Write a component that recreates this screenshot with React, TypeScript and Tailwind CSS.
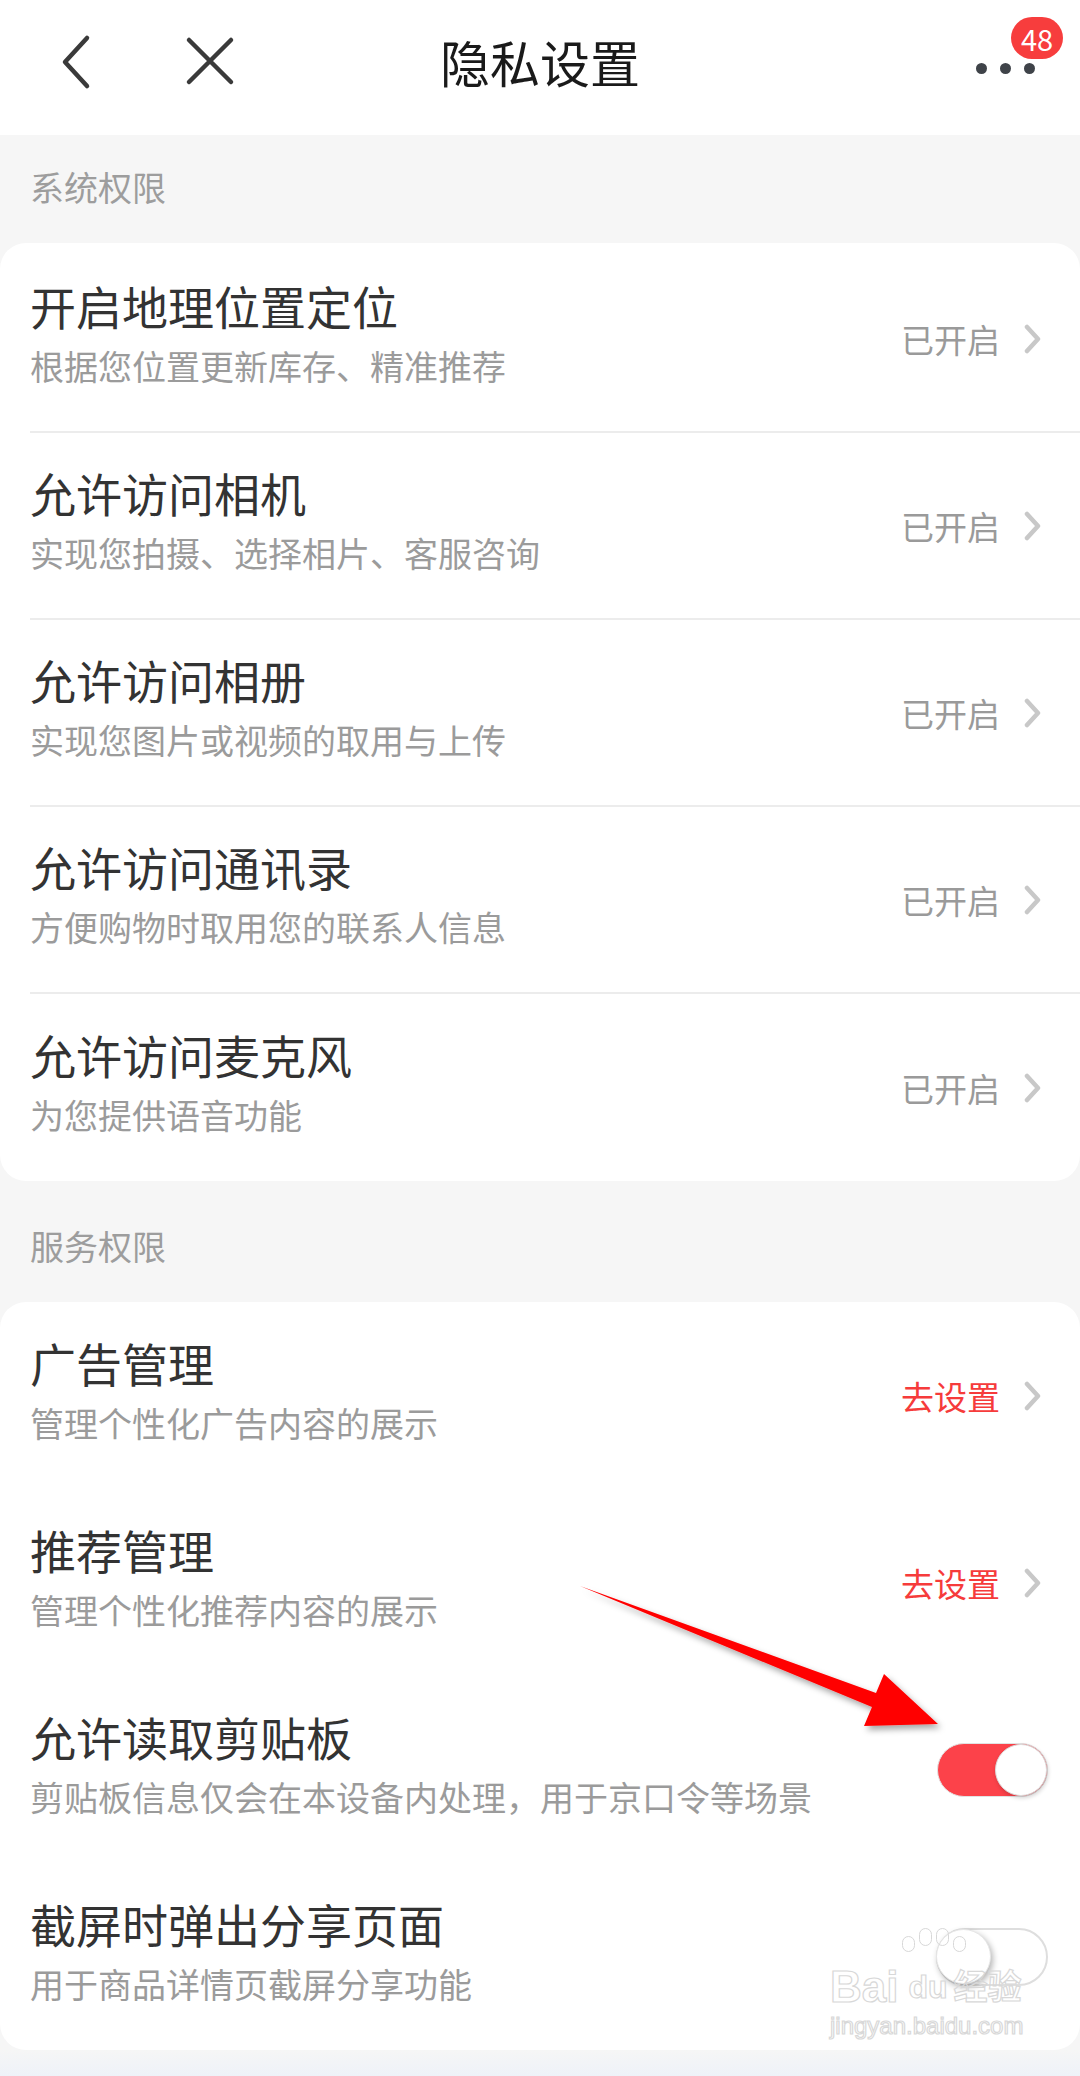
import React from 'react';

const font = { fontFamily: '"Noto Sans CJK SC", "Noto Sans", sans-serif' };

type Item = {
  title: string;
  sub: string;
  right: 'on' | 'set' | 'toggleOn' | 'toggleOff';
};

const systemItems: Item[] = [
  { title: '开启地理位置定位', sub: '根据您位置更新库存、精准推荐', right: 'on' },
  { title: '允许访问相机', sub: '实现您拍摄、选择相片、客服咨询', right: 'on' },
  { title: '允许访问相册', sub: '实现您图片或视频的取用与上传', right: 'on' },
  { title: '允许访问通讯录', sub: '方便购物时取用您的联系人信息', right: 'on' },
  { title: '允许访问麦克风', sub: '为您提供语音功能', right: 'on' },
];

const serviceItems: Item[] = [
  { title: '广告管理', sub: '管理个性化广告内容的展示', right: 'set' },
  { title: '推荐管理', sub: '管理个性化推荐内容的展示', right: 'set' },
  { title: '允许读取剪贴板', sub: '剪贴板信息仅会在本设备内处理，用于京口令等场景', right: 'toggleOn' },
  { title: '截屏时弹出分享页面', sub: '用于商品详情页截屏分享功能', right: 'toggleOff' },
];

const Chevron = () => (
  <svg width="18" height="30" viewBox="0 0 18 30" className="ml-[24px]">
    <path d="M3 3 L14 15 L3 27" fill="none" stroke="#c8c8c8" strokeWidth="4.5" strokeLinecap="round" strokeLinejoin="round" />
  </svg>
);

const Right = ({ kind }: { kind: Item['right'] }) => {
  if (kind === 'on' || kind === 'set') {
    return (
      <div className="flex items-center">
        <span
          className={
            kind === 'on'
              ? 'text-[33px] leading-[44px] text-[#9a9a9a]'
              : 'text-[33px] leading-[44px] text-[#f63b3b]'
          }
        >
          {kind === 'on' ? '已开启' : '去设置'}
        </span>
        <Chevron />
      </div>
    );
  }
  if (kind === 'toggleOn') {
    return (
      <div className="mr-[-6px] flex h-[54px] w-[111px] items-center justify-end rounded-full border border-[#e2e2e2] bg-[#fc424a]">
        <div className="h-[52px] w-[52px] rounded-full border border-[#dcdcdc] bg-white shadow-[1px_2px_4px_rgba(0,0,0,0.18)]" />
      </div>
    );
  }
  return (
    <div className="relative z-10 mr-[-6px] flex h-[58px] w-[112px] items-center rounded-full border-2 border-[#dedede] bg-white">
      <div className="-ml-[2px] h-[55px] w-[55px] rounded-full border border-[#e6e6e6] bg-white shadow-[2px_3px_6px_rgba(0,0,0,0.3)]" />
    </div>
  );
};

const Row = ({ item, divider }: { item: Item; divider: boolean }) => (
  <div className="pl-[30px]">
    <div
      className={
        divider
          ? 'flex h-[187px] items-center border-b-2 border-[#ececec] pr-[38px]'
          : 'flex h-[187px] items-center pr-[38px]'
      }
    >
      <div className="flex-1 pb-[10px]">
        <div className="text-[46px] leading-[52px] text-[#333333]">{item.title}</div>
        <div className="mt-[13px] text-[34px] leading-[44px] text-[#9b9b9b]">{item.sub}</div>
      </div>
      <Right kind={item.right} />
    </div>
  </div>
);

const Section = ({ label }: { label: string }) => (
  <div className="flex h-[108px] items-center pb-[6px] pl-[30px] text-[34px] text-[#9d9d9d]">{label}</div>
);

export default function App() {
  return (
    <div className="relative h-[2076px] w-[1080px] overflow-hidden bg-[#f6f6f6]" style={font}>
      {/* Header */}
      <div className="relative flex h-[135px] items-center justify-center bg-white">
        <svg width="36" height="56" viewBox="0 0 36 56" className="absolute left-[57px] top-[34px]">
          <path d="M30 4 L8 28 L30 52" fill="none" stroke="#3a3a3a" strokeWidth="4.5" strokeLinecap="round" strokeLinejoin="round" />
        </svg>
        <svg width="52" height="52" viewBox="0 0 52 52" className="absolute left-[184px] top-[35px]">
          <path d="M5 5 L47 47 M47 5 L5 47" fill="none" stroke="#3a3a3a" strokeWidth="4.5" strokeLinecap="round" />
        </svg>
        <div className="-mt-[12px] text-[50px] text-[#1a1a1a]">隐私设置</div>
        <div className="absolute left-[976px] top-[63px] flex gap-[13px]">
          <div className="h-[11px] w-[11px] rounded-full bg-[#3f4349]" />
          <div className="h-[11px] w-[11px] rounded-full bg-[#3f4349]" />
          <div className="h-[11px] w-[11px] rounded-full bg-[#3f4349]" />
        </div>
        <div className="absolute left-[1011px] top-[17px] flex h-[42px] w-[52px] items-center justify-center rounded-full bg-[#f73d3d] text-[29px] leading-none text-white">
          48
        </div>
      </div>

      <Section label="系统权限" />
      <div className="rounded-[26px] bg-white pt-[3px]">
        {systemItems.map((it, i) => (
          <Row key={it.title} item={it} divider={i < systemItems.length - 1} />
        ))}
      </div>

      <div className="h-[13px]" />
      <Section label="服务权限" />
      <div className="rounded-[26px] bg-white">
        {serviceItems.map((it) => (
          <Row key={it.title} item={it} divider={false} />
        ))}
      </div>

      <div className="h-[26px] bg-gradient-to-b from-[#f6f6f6] to-[#eef2f8]" />

      {/* Annotation arrow */}
      <svg width="1080" height="2076" viewBox="0 0 1080 2076" className="pointer-events-none absolute left-0 top-0 z-20">
        <defs>
          <filter id="sh" x="-10%" y="-10%" width="130%" height="130%">
            <feDropShadow dx="3" dy="4" stdDeviation="3" floodColor="#000" floodOpacity="0.35" />
          </filter>
        </defs>
        <polygon
          points="580,1586 876,1693 884,1674 938,1724 864,1726 872,1707"
          fill="#ff0000"
          filter="url(#sh)"
        />
      </svg>

      {/* Watermark */}
      <div className="pointer-events-none absolute left-[830px] top-[1962px] z-20 text-transparent [-webkit-text-stroke:1.2px_#d8d8d8]">
        <div className="flex items-end text-[44px] font-bold leading-[50px]" style={{ fontFamily: '"Liberation Sans", "Noto Sans CJK SC", sans-serif' }}>
          <span>Bai</span>
          <span className="relative ml-[10px] text-[32px]">
            du
            <span className="absolute -top-[26px] left-[-6px] flex gap-[4px]">
              <span className="h-[16px] w-[13px] rounded-full border-[1.2px] border-[#d8d8d8]" />
              <span className="mt-[-8px] h-[18px] w-[13px] rounded-full border-[1.2px] border-[#d8d8d8]" />
              <span className="mt-[-8px] h-[18px] w-[13px] rounded-full border-[1.2px] border-[#d8d8d8]" />
              <span className="h-[16px] w-[13px] rounded-full border-[1.2px] border-[#d8d8d8]" />
            </span>
          </span>
          <span className="ml-[6px] text-[34px]">经验</span>
        </div>
        <div className="text-[24px] leading-[28px]" style={{ fontFamily: '"Liberation Sans", sans-serif' }}>
          jingyan.baidu.com
        </div>
      </div>
    </div>
  );
}
